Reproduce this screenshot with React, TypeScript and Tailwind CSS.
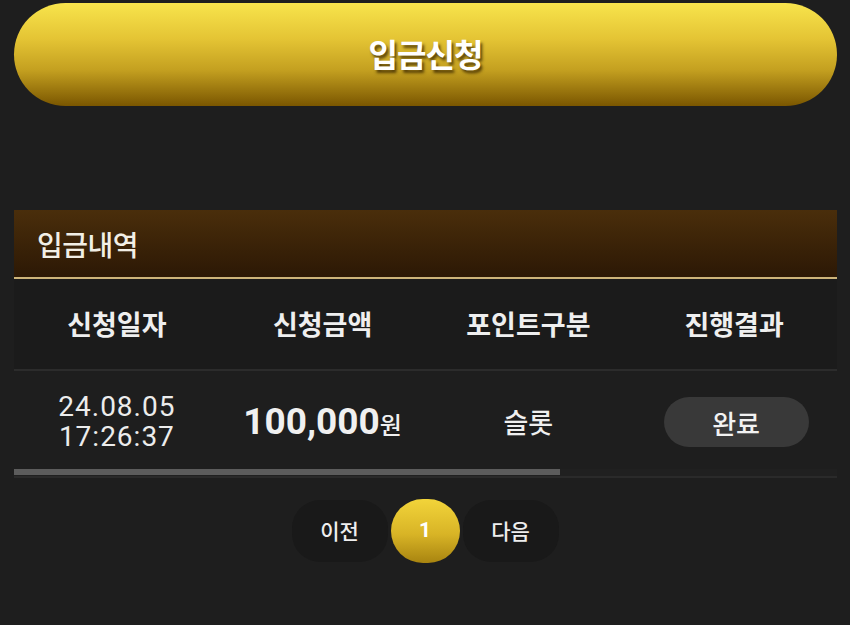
import React from "react";

const kr = { fontFamily: '"Noto Sans CJK KR", "Noto Sans", sans-serif' };
const num = { fontFamily: 'Roboto, "Noto Sans CJK KR", sans-serif' };

export default function App() {
  return (
    <div className="w-[850px] h-[625px] bg-[#1e1e1e] overflow-hidden text-white" style={kr}>
      <div className="px-[14px] pt-[3px]">
        <button className="w-[823px] h-[103px] rounded-full bg-[linear-gradient(180deg,#f8e44c_0%,#e4c434_35%,#c4a020_65%,#7a5600_100%)] flex items-center justify-center">
          <span className="text-[32px] font-bold tracking-[-1px] text-white leading-none pb-[3px] [text-shadow:2px_3px_3px_rgba(60,40,0,0.8)]">입금신청</span>
        </button>
      </div>

      <div className="mx-[14px] mt-[104px] w-[823px]">
        <div className="h-[69px] bg-[linear-gradient(180deg,#4a2e0b_0%,#2c1805_100%)] border-b-2 border-[#cdb47a] flex items-center pl-[23px]">
          <span className="text-[28px] font-medium text-[#f2efe6] tracking-[-0.5px]">입금내역</span>
        </div>
        <div className="grid grid-cols-4 h-[92px] bg-[#1b1b1b] border-b-2 border-[#2c2c2c] items-center text-center">
          <span className="text-[27px] font-bold text-[#efefef]">신청일자</span>
          <span className="text-[27px] font-bold text-[#efefef]">신청금액</span>
          <span className="text-[27px] font-bold text-[#efefef]">포인트구분</span>
          <span className="text-[27px] font-bold text-[#efefef]">진행결과</span>
        </div>
        <div className="grid grid-cols-4 h-[98px] items-center text-center pt-[4px]">
          <div className="flex flex-col items-center gap-[2px] text-[28px] tracking-[1px] text-[#ececec]" style={num}>
            <span className="leading-[28px]">24.08.05</span>
            <span className="leading-[28px]">17:26:37</span>
          </div>
          <div className="flex items-baseline justify-center text-[#f0f0f0]">
            <span className="text-[37px] font-bold" style={num}>100,000</span>
            <span className="text-[24px] font-medium">원</span>
          </div>
          <span className="text-[27px] font-medium text-[#efefef]">슬롯</span>
          <div className="flex justify-center pl-[4px]">
            <span className="w-[145px] h-[50px] rounded-full bg-[#393939] flex items-center justify-center text-[26px] font-medium text-[#f2f2f2]">완료</span>
          </div>
        </div>
        <div className="h-[7px] bg-[#202020]">
          <div className="w-[546px] h-[6px] bg-[#5c5c5c]"></div>
        </div>
        <div className="h-[2px] bg-[#2a2a2a]"></div>
      </div>

      <div className="flex justify-center items-center gap-[3px] mt-[21px]">
        <button className="w-[96px] h-[62px] rounded-[28px] bg-[#191919] text-[21px] font-medium text-[#eeeeee]">이전</button>
        <button className="w-[69px] h-[64px] rounded-full bg-[linear-gradient(180deg,#f2d43a_0%,#d8b426_55%,#a88410_100%)] text-[21px] font-bold text-white" style={num}>1</button>
        <button className="w-[96px] h-[62px] rounded-[28px] bg-[#191919] text-[21px] font-medium text-[#eeeeee]">다음</button>
      </div>
    </div>
  );
}
